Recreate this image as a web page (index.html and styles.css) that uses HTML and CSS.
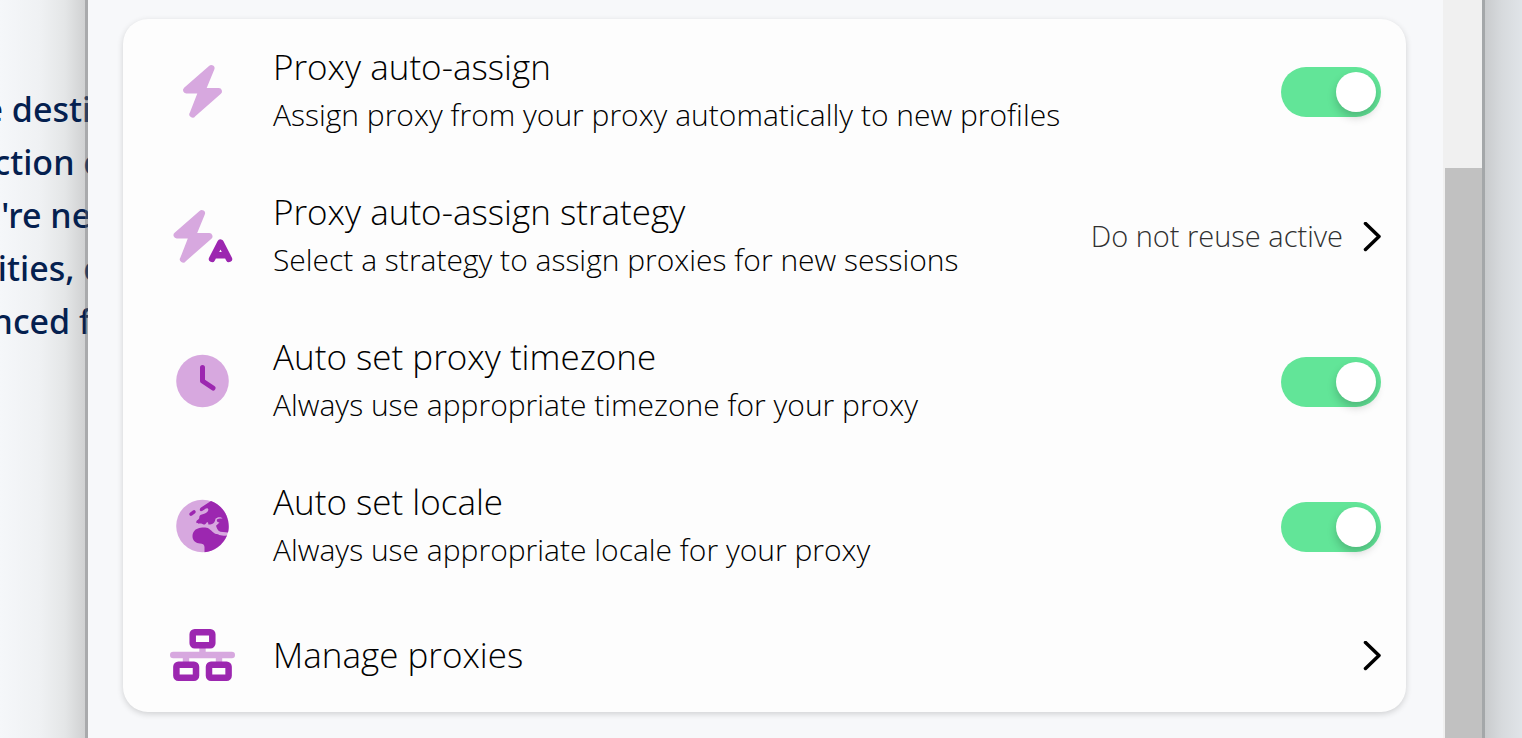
FILE: index.html
```
<!DOCTYPE html>
<html lang="en">
<head>
<meta charset="utf-8">
<title>Proxy settings</title>
<link rel="stylesheet" href="styles.css">
</head>
<body>
<div class="backdrop" aria-hidden="true">
  <p class="line">e desti </p>
  <p class="line">ction c</p>
  <p class="line">'re ne </p>
  <p class="line">ities, c</p>
  <p class="line">nced f </p>
</div>
<div class="window">
  <main class="content">
    <section class="card">
      <div class="row">
        <svg class="icon" viewBox="0 0 65 52" aria-hidden="true">
          <path class="light" d="M44.300 4.400A3.200 3.200 0 0 0 39 1L14.100 22.800A3.250 3.250 0 0 0 16.200 28.500H27.300L19.900 47.600A3.200 3.200 0 0 0 25.300 51.200L50.900 28.700A3.250 3.250 0 0 0 48.800 23H36.700Z"/>
        </svg>
        <div class="text">
          <label class="title" for="assign">Proxy auto-assign</label>
          <p class="note">Assign proxy from your proxy automatically to new profiles</p>
        </div>
        <input class="switch" type="checkbox" id="assign" checked>
      </div>
      <div class="row">
        <svg class="icon" viewBox="0 0 65 52" aria-hidden="true">
          <path class="light" transform="translate(-9.500 0)" d="M44.300 4.400A3.200 3.200 0 0 0 39 1L14.100 22.800A3.250 3.250 0 0 0 16.200 28.500H27.300L19.900 47.600A3.200 3.200 0 0 0 25.300 51.200L50.900 28.700A3.250 3.250 0 0 0 48.800 23H36.700Z"/>
          <path class="dark-line" d="M42 49L50.500 32.500L59 49M44.500 45.200H56.500"/>
        </svg>
        <div class="text">
          <h2 class="title">Proxy auto-assign strategy</h2>
          <p class="note">Select a strategy to assign proxies for new sessions</p>
        </div>
        <button class="choice" type="button" aria-label="Do not reuse active">
          <span>Do not reuse active</span>
          <svg class="chevron" viewBox="0 0 18 30" aria-hidden="true"><path d="M2.500 1.500L16 14.500L2.500 27.500"/></svg>
        </button>
      </div>
      <div class="row">
        <svg class="icon" viewBox="0 0 65 52" aria-hidden="true">
          <circle class="light" cx="32.500" cy="26" r="26.300"/>
          <path class="hand" d="M32.500 12.500V26L43 33"/>
        </svg>
        <div class="text">
          <label class="title" for="timezone">Auto set proxy timezone</label>
          <p class="note">Always use appropriate timezone for your proxy</p>
        </div>
        <input class="switch" type="checkbox" id="timezone" checked>
      </div>
      <div class="row">
        <svg class="icon" viewBox="0 0 65 52" aria-hidden="true">
          <circle class="light" cx="32.500" cy="26" r="26.300"/>
          <path class="dark" d="M41 1.100C50.500 4.200 58.500 14 58.700 26C58.800 29 58.500 30.500 58 32.500L50.500 31.800C47.500 30.800 46.500 27 46 25.700L49.500 22.500C47 22 46.500 21 47 19.500C48.500 18 52 18.500 52.600 18.500C51 16.500 47 16.800 45.500 18.800C45 20.500 45 22.500 43 23.500C41 24.500 39 25 38.200 24.200C38.500 22.500 37.500 21.800 36.500 22.700C35.500 24 34.800 25 33 24.200C30.500 23 27 24.500 26.300 22.500C26 20 29 20 29.300 17.800C29 15.500 31 14.500 33.500 14C37 13 39.500 10 37.800 8.500C36 7 33 11.500 31 11.200C29.200 10.700 29.500 8.500 31 7.600Z"/>
          <path class="dark" d="M28 28.500C31 27.500 36 27 39 28.700C42.500 31 43.500 34 48 34.300C50.500 35.800 53 36 57 35.500C53 45 43.500 52 34.500 52.200V47C34.500 44.500 32.500 43.500 30 43.500C26 43.500 22.500 40.500 22.500 36.500C22.500 32.500 24.500 29.500 28 28.500Z"/>
          <path class="island" d="M21 14.200L24 11.800"/>
        </svg>
        <div class="text">
          <label class="title" for="locale">Auto set locale</label>
          <p class="note">Always use appropriate locale for your proxy</p>
        </div>
        <input class="switch" type="checkbox" id="locale" checked>
      </div>
      <div class="row row-short">
        <svg class="icon" viewBox="0 0 65 52" aria-hidden="true">
          <path class="net" d="M3.200 26H61.800M32.500 18V26M16 26V34M49 26V34"/>
          <rect class="box" x="22.700" y="3.300" width="19.600" height="13" rx="2"/>
          <rect class="box" x="6.400" y="35.800" width="19.600" height="13" rx="2"/>
          <rect class="box" x="39" y="35.800" width="19.600" height="13" rx="2"/>
        </svg>
        <div class="text">
          <h2 class="title">Manage proxies</h2>
        </div>
        <button class="choice" type="button" aria-label="Open proxies">
          <svg class="chevron" viewBox="0 0 18 30" aria-hidden="true"><path d="M2.500 1.500L16 14.500L2.500 27.500"/></svg>
        </button>
      </div>
    </section>
  </main>
  <div class="scrollbar"><div class="thumb"></div></div>
</div>
</body>
</html>
```
FILE: styles.css
```
* { box-sizing: border-box; }
body {
  margin: 0;
  min-height: 100vh;
  display: flex;
  overflow: hidden;
  background: linear-gradient(90deg, #f5f7fa 0, #eff1f3 40px, #e4e6e7 65px, #d0d1d2 85px, #c9cbcd calc(100% - 37px), #d7dadd calc(100% - 20px), #e0e4e8 100%);
  font-family: "Open Sans", "Noto Sans", sans-serif;
  font-weight: 300;
  color: #000;
}
h2, p { margin: 0; }
.backdrop {
  position: absolute;
  top: 83px;
  left: 0;
  width: 100px;
  overflow: hidden;
  font-family: "Noto Sans", sans-serif;
  font-size: 34px;
  font-weight: 500;
  line-height: 53px;
  color: #04204f;
}
.line {
  display: flex;
  justify-content: flex-end;
  white-space: pre;
}
.window {
  position: relative;
  flex: 1;
  display: flex;
  margin: 0 37px 0 85px;
  border: solid rgba(110, 112, 114, 0.4);
  border-width: 0 3px;
  background: #f7f8fa;
  background-clip: padding-box;
}
.content {
  flex: 1;
  padding: 19px 37px 26px 35px;
}
.card {
  border-radius: 25px;
  background: #fdfdfd;
  box-shadow: 0 2px 6px rgba(0, 0, 0, 0.16);
}
.row {
  display: flex;
  align-items: center;
  min-height: 145px;
  padding: 0 25px 0 47px;
}
.row-short { min-height: 113px; }
.icon {
  flex: none;
  width: 65px;
  height: 52px;
  margin: 0 38px 2px 0;
  overflow: visible;
}
.light { fill: #d7a8df; }
.dark { fill: #9c27b0; }
.dark-line, .hand, .island, .box {
  fill: none;
  stroke: #9c27b0;
  stroke-linecap: round;
  stroke-linejoin: round;
}
.dark-line { stroke-width: 6.400; }
.hand { stroke-width: 5; }
.island { stroke-width: 3.500; }
.box { stroke-width: 6.500; }
.net {
  fill: none;
  stroke: #d7a8df;
  stroke-width: 6.400;
  stroke-linecap: round;
}
.text {
  flex: 1;
  padding-bottom: 2px;
}
.title {
  display: block;
  font-size: 35px;
  font-weight: 300;
  line-height: 48px;
}
.note {
  font-size: 30px;
  line-height: 48px;
}
.switch {
  appearance: none;
  flex: none;
  display: flex;
  justify-content: flex-end;
  width: 100px;
  height: 50px;
  margin: 0;
  padding: 5px;
  border-radius: 25px;
  background: #62e598;
}
.switch::before {
  content: "";
  width: 40px;
  height: 40px;
  border-radius: 50%;
  background: #fff;
  box-shadow: 0 5px 10px rgba(0, 0, 0, 0.2);
}
.choice {
  display: flex;
  align-items: center;
  gap: 20px;
  padding: 0;
  border: 0;
  background: none;
  font: inherit;
  font-size: 29px;
  line-height: 48px;
  color: #303030;
}
.choice span { padding-bottom: 2px; }
.chevron {
  width: 18px;
  height: 30px;
  fill: none;
  stroke: #000;
  stroke-width: 3.500;
  stroke-linecap: round;
  stroke-linejoin: round;
}
.scrollbar {
  width: 39px;
  padding: 168px 0 0 2px;
  background: #f0f0f0;
}
.thumb {
  height: 100%;
  background: #c1c1c1;
}
```
